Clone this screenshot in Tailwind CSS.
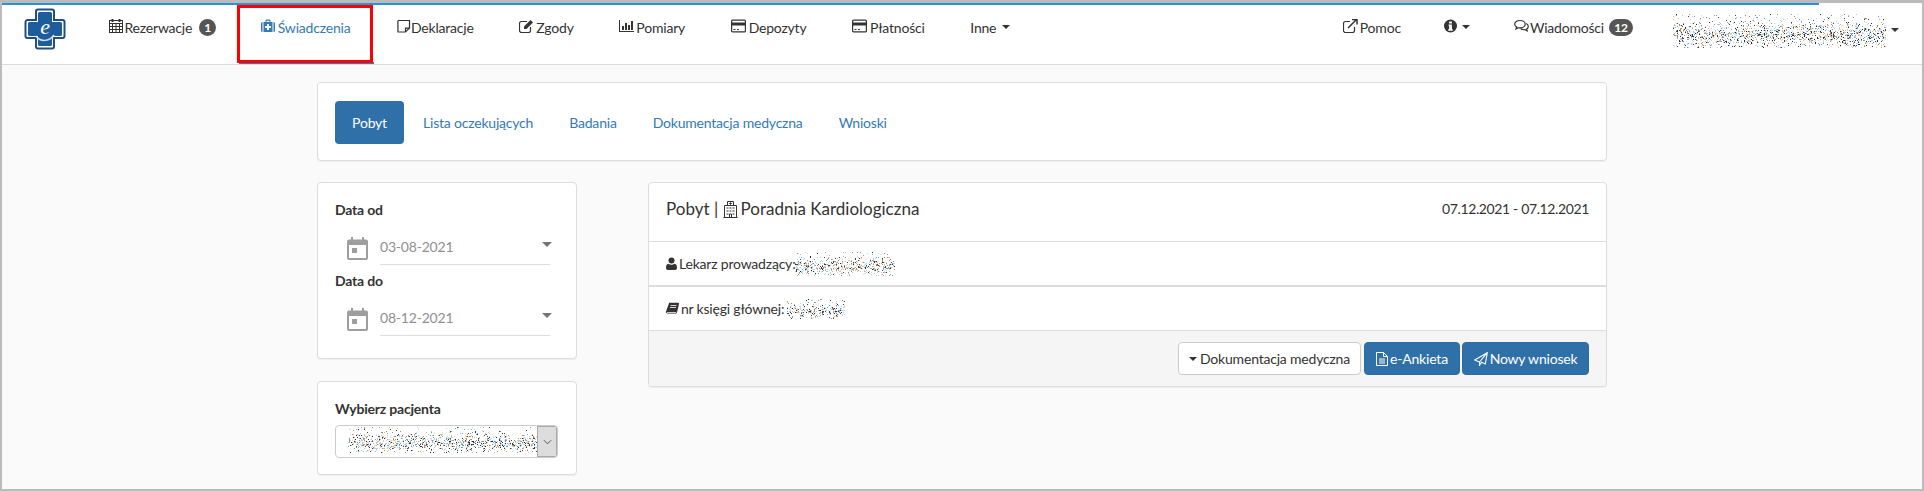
<!DOCTYPE html>
<html lang="pl">

<head>
    <meta charset="UTF-8">
    <meta name="viewport" content="width=device-width, initial-scale=1.0">
    <title>Świadczenia</title>
    <script src="https://cdn.jsdelivr.net/npm/@tailwindcss/browser@4"></script>
</head>

<body class="bg-[#bbbbbb] [font-family:Lato,sans-serif] text-[14px] tracking-[-0.2px] text-[#333333]">
    <div class="relative w-[1924px] h-[491px] overflow-hidden pt-[3px] px-[2px] pb-[2px]">
        <div class="bg-[#fafafa] h-full flex flex-col">
            <!-- top line -->
            <div class="bg-white h-[2px] shrink-0">
                <div class="bg-[#2a93d5] h-[2px] w-[1817px]"></div>
            </div>

            <!-- navbar -->
            <nav class="relative bg-white h-[60px] border-b border-[#dddddd] flex items-start shrink-0">
                <a class="ml-[22px] mt-[3px] w-[42px] h-[42px] block shrink-0">
                    <svg viewBox="0 0 42 42" class="w-[42px] h-[42px]">
                        <path d="M14 1.500h14a2 2 0 0 1 2 2V12h8.500a2 2 0 0 1 2 2v14a2 2 0 0 1-2 2H30v8.500a2 2 0 0 1-2 2H14a2 2 0 0 1-2-2V30H3.500a2 2 0 0 1-2-2V14a2 2 0 0 1 2-2H12V3.500a2 2 0 0 1 2-2z" fill="#fff" stroke="#1d4f85" stroke-width="2" />
                        <path d="M15.500 4h11a1.500 1.500 0 0 1 1.500 1.500V14h8.500a1.500 1.500 0 0 1 1.500 1.500v11a1.500 1.500 0 0 1-1.500 1.500H28v8.500a1.500 1.500 0 0 1-1.500 1.500h-11a1.500 1.500 0 0 1-1.500-1.500V28H5.500A1.500 1.500 0 0 1 4 26.500v-11A1.500 1.500 0 0 1 5.500 14H14V5.500A1.500 1.500 0 0 1 15.500 4z" fill="#1f5c9b" />
                        <text x="21" y="26" text-anchor="middle" font-family="Liberation Serif" font-style="italic" font-size="22" fill="#fff">e</text>
                        <path d="M12 28c4 6 13 6 18-1" fill="none" stroke="#cfe0f0" stroke-width="1.500" />
                    </svg>
                </a>
                <ul class="flex ml-[20px] h-[59px]">
                    <li class="flex items-start px-[22.500px] pt-[12px] gap-[2px]">
                        <svg viewBox="0 0 14 14" class="w-[14px] h-[14px] mt-[2px]" fill="none" stroke="#333" stroke-width="1">
                            <path d="M3.500 0v3M10.500 0v3" stroke-width="2" />
                            <rect x=".5" y="1.500" width="13" height="12" />
                            <path d="M.5 4.500h13M.5 7.500h13M.5 10.500h13M3.500 4.500v9M7 4.500v9M10.500 4.500v9" />
                        </svg>
                        <span>Rezerwacje</span>
                        <span class="ml-[5px] mt-[2px] w-[17px] h-[17px] rounded-full bg-[#555555] text-white text-[12px] font-bold flex items-center justify-center">1</span>
                    </li>
                    <li class="relative flex items-start px-[22px] pt-[12px] gap-[3px] text-[#337ab7] w-[135px] border-b-2 border-[#337ab7]">
                        <svg viewBox="0 0 14 14" class="w-[14px] h-[14px] mt-[2px]" fill="#337ab7">
                            <path d="M4.500 3V1.500A1 1 0 0 1 5.500.5h3a1 1 0 0 1 1 1V3H8.500V1.800h-3V3zM0 4.500A1.500 1.500 0 0 1 1.500 3V13A1.500 1.500 0 0 1 0 11.500zM14 4.500A1.500 1.500 0 0 0 12.500 3V13A1.500 1.500 0 0 0 14 11.500z" />
                            <path fill-rule="evenodd" d="M2.500 3h9v10h-9zM6 5v2H4v2h2v2h2V9h2V7H8V5z" />
                        </svg>
                        <span>Świadczenia</span>
                    </li>
                    <li class="flex items-start px-[22.800px] pt-[12px] gap-[0.500px]">
                        <svg viewBox="0 0 14 14" class="w-[14px] h-[14px] mt-[2px]" fill="none" stroke="#333" stroke-width="1.200">
                            <path d="M1.500 1.500h11v7.500l-4 4h-7a.6.6 0 0 1-.6-.6V2z" />
                            <path d="M8.500 13V9.200h4" />
                        </svg>
                        <span>Deklaracje</span>
                    </li>
                    <li class="flex items-start px-[22.800px] pt-[12px] gap-[2px]">
                        <svg viewBox="0 0 15 14" class="w-[15px] h-[14px] mt-[2px]" fill="none" stroke="#333" stroke-width="1.200">
                            <path d="M11.500 8v3.500a2 2 0 0 1-2 2H2.500a2 2 0 0 1-2-2v-7a2 2 0 0 1 2-2H8" />
                            <path d="M5 7.500 11.500 1l2.500 2.500L7.500 10H5z" fill="#333" stroke="none" />
                        </svg>
                        <span>Zgody</span>
                    </li>
                    <li class="flex items-start px-[22.800px] pt-[12px] gap-[2px]">
                        <svg viewBox="0 0 15 14" class="w-[15px] h-[14px] mt-[2px]" fill="#333">
                            <path d="M0 1h1v11h14v1H0z" />
                            <path d="M3 7h2v4H3zM6 4h2v7H6zM9 6h2v5H9zM12 2h2v9h-2z" />
                        </svg>
                        <span>Pomiary</span>
                    </li>
                    <li class="flex items-start px-[22.800px] pt-[12px] gap-[3px]">
                        <svg viewBox="0 0 15 14" class="w-[15px] h-[14px] mt-[2px]" fill="none" stroke="#333" stroke-width="1.200">
                            <rect x=".6" y="1.100" width="13.800" height="11.800" rx="1" />
                            <path d="M1 3.500h13v3H1z" fill="#333" stroke="none" />
                            <path d="M2.500 10.500h2M6 10.500h2" />
                        </svg>
                        <span>Depozyty</span>
                    </li>
                    <li class="flex items-start px-[22.800px] pt-[12px] gap-[3px]">
                        <svg viewBox="0 0 15 14" class="w-[15px] h-[14px] mt-[2px]" fill="none" stroke="#333" stroke-width="1.200">
                            <rect x=".6" y="1.100" width="13.800" height="11.800" rx="1" />
                            <path d="M1 3.500h13v3H1z" fill="#333" stroke="none" />
                            <path d="M2.500 10.500h2M6 10.500h2" />
                        </svg>
                        <span>Płatności</span>
                    </li>
                    <li class="flex items-start px-[22.800px] pt-[12px] gap-[6px]">
                        <span>Inne</span>
                        <span class="mt-[8px] w-0 h-0 border-x-[4px] border-x-transparent border-t-[4px] border-t-[#333333]"></span>
                    </li>
                </ul>
                <ul class="flex ml-auto h-[59px] pr-[23px]">
                    <li class="flex items-start pt-[12px] gap-[2px] mr-[43px]">
                        <svg viewBox="0 0 15 14" class="w-[15px] h-[14px] mt-[2px]" fill="none" stroke="#333" stroke-width="1.200">
                            <path d="M11.500 8v3.500a2 2 0 0 1-2 2H2.500a2 2 0 0 1-2-2v-7a2 2 0 0 1 2-2H7" />
                            <path d="M5 9 13 1M9 .6h5v5" stroke-width="1.500" />
                        </svg>
                        <span>Pomoc</span>
                    </li>
                    <li class="flex items-start pt-[12px] gap-[5px] mr-[44px]">
                        <svg viewBox="0 0 14 14" class="w-[13px] h-[14px] mt-[2px]">
                            <circle cx="7" cy="7" r="7" fill="#333" />
                            <path d="M5.500 2.200h3v2h-3zM5 5.500h3.500v5H9.500v1.500h-5v-1.500h1V7H5z" fill="#fff" />
                        </svg>
                        <span class="mt-[8px] w-0 h-0 border-x-[4px] border-x-transparent border-t-[4px] border-t-[#333333]"></span>
                    </li>
                    <li class="flex items-start pt-[12px] gap-[1px] mr-[40px]">
                        <svg viewBox="0 0 15 14" class="w-[15px] h-[14px] mt-[2px]" fill="none" stroke="#333" stroke-width="1.200">
                            <path d="M6 1.500c3 0 5.200 1.600 5.200 3.700S9 8.900 6 8.900c-.6 0-1.200 0-1.800-.2L2 10l.6-2C1.400 7.300.7 6.300.7 5.200.7 3.100 3 1.500 6 1.500z" />
                            <path d="M12.200 4.500c1.300.7 2.100 1.700 2.100 2.900 0 1-.6 1.900-1.600 2.500l.5 2-2.200-1.200c-1.800.2-3.500-.2-4.500-1.200" />
                        </svg>
                        <span>Wiadomości</span>
                        <span class="ml-[4px] mt-[2px] w-[24px] h-[17px] rounded-full bg-[#555555] text-white text-[12px] font-bold flex items-center justify-center">12</span>
                    </li>
                    <li class="flex items-start pt-[9px] gap-[5px]">
                        <canvas data-noise width="213" height="34" class="w-[213px] h-[34px]"></canvas>
                        <span class="mt-[14px] w-0 h-0 border-x-[4px] border-x-transparent border-t-[4px] border-t-[#333333]"></span>
                    </li>
                </ul>
                <!-- red annotation round the active tab -->
                <div class="absolute left-[235px] top-0 w-[136px] h-[58px] border-[3px] border-[#ff0000]"></div>
            </nav>

            <!-- content -->
            <main class="w-[1290px] ml-[315px] mt-[17px]">
                <div class="bg-white border border-[#dddddd] rounded-[4px] shadow-[0_1px_1px_rgba(0,0,0,0.05)] h-[79px] px-[17px] pt-[18px] flex items-start text-[#337ab7]">
                    <a class="bg-[#2f70a9] text-white rounded-[4px] w-[69px] h-[43px] flex items-center justify-center">Pobyt</a>
                    <a class="ml-[19px] mr-[18px] h-[43px] flex items-center">Lista oczekujących</a>
                    <a class="ml-[18px] h-[43px] flex items-center">Badania</a>
                    <a class="ml-[36px] h-[43px] flex items-center">Dokumentacja medyczna</a>
                    <a class="ml-[36px] h-[43px] flex items-center">Wnioski</a>
                </div>

                <div class="flex gap-[71px] mt-[21px] items-start">
                    <!-- filters -->
                    <aside class="w-[260px] shrink-0 flex flex-col gap-[22px]">
                        <div class="bg-white border border-[#dddddd] rounded-[4px] shadow-[0_1px_1px_rgba(0,0,0,0.05)] h-[177px] px-[17px] pt-[17px]">
                            <label class="block font-bold leading-[20px]">Data od</label>
                            <div class="flex items-start mt-[17px] ml-[12px]">
                                <svg viewBox="0 0 21 23" class="w-[21px] h-[23px] shrink-0" fill="#9e9e9e">
                                    <path fill-rule="evenodd" d="M4 0h2v2.500h9V0h2v2.500h2a2 2 0 0 1 2 2V21a2 2 0 0 1-2 2H2a2 2 0 0 1-2-2V4.500a2 2 0 0 1 2-2h2zM2 8v13h17V8z" />
                                    <path d="M5 11h5v5H5z" />
                                </svg>
                                <div class="relative ml-[12px] w-[170px] h-[28px] border-b border-[#dddddd] text-[#8f8f8f] leading-[18px] pt-[1px]">
                                    03-08-2021
                                    <span class="absolute right-[-2px] top-[5px] w-0 h-0 border-x-[5px] border-x-transparent border-t-[5px] border-t-[#757575]"></span>
                                </div>
                            </div>
                            <label class="block font-bold leading-[20px] mt-[6px]">Data do</label>
                            <div class="flex items-start mt-[17px] ml-[12px]">
                                <svg viewBox="0 0 21 23" class="w-[21px] h-[23px] shrink-0" fill="#9e9e9e">
                                    <path fill-rule="evenodd" d="M4 0h2v2.500h9V0h2v2.500h2a2 2 0 0 1 2 2V21a2 2 0 0 1-2 2H2a2 2 0 0 1-2-2V4.500a2 2 0 0 1 2-2h2zM2 8v13h17V8z" />
                                    <path d="M5 11h5v5H5z" />
                                </svg>
                                <div class="relative ml-[12px] w-[170px] h-[28px] border-b border-[#dddddd] text-[#8f8f8f] leading-[18px] pt-[1px]">
                                    08-12-2021
                                    <span class="absolute right-[-2px] top-[5px] w-0 h-0 border-x-[5px] border-x-transparent border-t-[5px] border-t-[#757575]"></span>
                                </div>
                            </div>
                        </div>
                        <div class="bg-white border border-[#dddddd] rounded-[4px] shadow-[0_1px_1px_rgba(0,0,0,0.05)] h-[94px] px-[17px] pt-[17px]">
                            <label class="block font-bold leading-[20px]">Wybierz pacjenta</label>
                            <div class="flex mt-[6px] w-[223px] h-[33px] border border-[#cccccc] rounded-[4px] overflow-hidden">
                                <div class="flex-1 pl-[12px] pt-[1px]">
                                    <canvas data-noise width="189" height="26" class="w-[189px] h-[26px]"></canvas>
                                </div>
                                <div class="w-[21px] bg-[#dddddd] border border-[#aaaaaa] flex items-center justify-center">
                                    <svg viewBox="0 0 10 6" class="w-[9px] h-[6px]" fill="none" stroke="#444" stroke-width="1">
                                        <path d="M1 1l4 4 4-4" />
                                    </svg>
                                </div>
                            </div>
                        </div>
                    </aside>

                    <!-- stay card -->
                    <section class="w-[959px] h-[205px] bg-white border border-[#dddddd] rounded-[4px] shadow-[0_1px_1px_rgba(0,0,0,0.05)] overflow-hidden flex flex-col">
                        <div class="h-[59px] border-b border-[#dddddd] px-[17px] pt-[14px] flex justify-between items-start shrink-0">
                            <h3 class="flex items-center text-[17px] tracking-normal leading-[24px]">
                                <span class="whitespace-pre">Pobyt | </span>
                                <svg viewBox="0 0 15 17" class="w-[15px] h-[17px] mr-[3px]" fill="none" stroke="#333" stroke-width="1">
                                    <path d="M1.500 16.500V4.500h12v12zM4.500 4.500V.5h6v4M.5 16.500h14" />
                                    <path d="M6.200 2.500h2.600M7.500 1.300v2.400M3.500 7h2M6.500 7h2M9.500 7h2M3.500 10h2M6.500 10h2M9.500 10h2M3.500 13h2M9.500 13h2M6.500 13h2v3.500h-2z" />
                                </svg>
                                <span>Poradnia Kardiologiczna</span>
                            </h3>
                            <span class="leading-[24px] tracking-[-0.37px]">07.12.2021 - 07.12.2021</span>
                        </div>
                        <div class="h-[45px] border-b-2 border-[#dddddd] px-[17px] flex items-center shrink-0">
                            <svg viewBox="0 0 12 14" class="w-[11px] h-[13px] mr-[2px]" fill="#333">
                                <circle cx="6" cy="3.800" r="3.300" />
                                <path d="M2.500 7.200C3.500 8 4.700 8.300 6 8.300s2.500-.3 3.500-1.100c1.700.2 2.500 2 2.500 4.300 0 1.500-.9 2.500-2.200 2.500H2.200C.9 14 0 13 0 11.500c0-2.300.8-4.100 2.500-4.300z" />
                            </svg>
                            <span>Lekarz prowadzący:</span>
                            <canvas data-noise width="100" height="24" class="w-[100px] h-[24px]"></canvas>
                        </div>
                        <div class="h-[44px] border-b border-[#dddddd] px-[17px] flex items-center shrink-0">
                            <svg viewBox="0 0 13 13" class="w-[13px] h-[13px] mr-[2px]" fill="#333">
                                <path d="M3.200.8H12a1 1 0 0 1 1 1.200l-2 8.500a1.500 1.500 0 0 1-1.400 1.200H2a2 2 0 0 1-2-2.200z" />
                                <path d="M1.200 10.300h9l-.2 1H2a.5.5 0 0 1-.8-1z" fill="#fff" />
                                <path d="M4.500 3.500h6M4 5.500h6" stroke="#fff" stroke-width=".8" />
                            </svg>
                            <span class="whitespace-pre">nr księgi głównej: </span>
                            <canvas data-noise width="58" height="20" class="w-[58px] h-[20px] ml-[-1px]"></canvas>
                        </div>
                        <div class="flex-1 bg-[#f5f5f5] flex items-start justify-end gap-[3px] px-[17px] pt-[11px]">
                            <button class="h-[33px] w-[183px] bg-white border border-[#cccccc] rounded-[4px] flex items-center justify-center gap-[3px]">
                                <span class="w-0 h-0 border-x-[4px] border-x-transparent border-t-[4px] border-t-[#333333]"></span>
                                <span>Dokumentacja medyczna</span>
                            </button>
                            <button class="h-[33px] w-[96px] mr-[-1px] bg-[#2f70a9] border border-[#2e6da4] rounded-[4px] text-white flex items-center justify-center gap-[2px]">
                                <svg viewBox="0 0 12 14" class="w-[12px] h-[14px]" fill="none" stroke="#fff" stroke-width="1">
                                    <path d="M.5.5h7l4 4v9H.5zM7.500.5v4h4M3 7h6M3 9h6M3 11h6" />
                                </svg>
                                <span>e-Ankieta</span>
                            </button>
                            <button class="h-[33px] w-[127px] bg-[#2f70a9] border border-[#2e6da4] rounded-[4px] text-white flex items-center justify-center gap-[2px]">
                                <svg viewBox="0 0 14 14" class="w-[14px] h-[14px]" fill="none" stroke="#fff" stroke-width="1.100">
                                    <path d="M13.300.7 11.300 12 7.500 10.300 5.500 13.300V10L.7 8zM5.500 10 13.300.7" />
                                </svg>
                                <span>Nowy wniosek</span>
                            </button>
                        </div>
                    </section>
                </div>
            </main>
        </div>
    </div>

    <script>
        // redacted text in the screenshot: speckled pixels
        const colors = ['#2a2a3a', '#3a3f55', '#d08a3c', '#e8b27a', '#5aa8e8', '#a8d8f5', '#a8d8f5', '#8a8a8a', '#c9c9c9', '#dddddd'];
        let seed = 12345;
        function rnd() {
            seed = (seed * 16807) % 2147483647;
            return seed / 2147483647;
        }
        document.querySelectorAll('canvas[data-noise]').forEach((canvas) => {
            const ctx = canvas.getContext('2d');
            for (let y = 0; y < canvas.height; y++) {
                const mid = y / canvas.height;
                const density = 0.05 + 0.38 * Math.max(0, 1 - Math.abs(mid - 0.6) * 2.4);
                for (let x = 0; x < canvas.width; x++) {
                    if (rnd() < density) {
                        ctx.fillStyle = colors[Math.floor(rnd() * colors.length)];
                        ctx.fillRect(x, y, 1, 1);
                    }
                }
            }
        });
    </script>
</body>

</html>
